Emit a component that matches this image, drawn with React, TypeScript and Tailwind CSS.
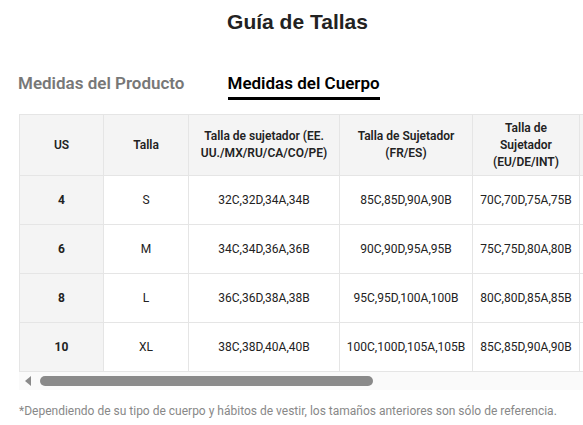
const rows = [
  ["4", "S", "32C,32D,34A,34B", "85C,85D,90A,90B", "70C,70D,75A,75B"],
  ["6", "M", "34C,34D,36A,36B", "90C,90D,95A,95B", "75C,75D,80A,80B"],
  ["8", "L", "36C,36D,38A,38B", "95C,95D,100A,100B", "80C,80D,85A,85B"],
  ["10", "XL", "38C,38D,40A,40B", "100C,100D,105A,105B", "85C,85D,90A,90B"],
];

const widths = ["w-[84px]", "w-[85px]", "w-[151px]", "w-[133px]", "w-[107px]", "w-[100px]"];

export default function App() {
  return (
    <div className="w-[583px] h-[425px] overflow-hidden bg-white font-['Roboto',sans-serif] text-[#222]">
      <h1 className="pt-[8px] pl-[12px] text-center text-[21px] leading-[28px] font-bold font-['Liberation_Sans',Arial,sans-serif] text-[#222]">
        Guía de Tallas
      </h1>

      <div className="mt-[35px] flex items-start gap-[43px] pl-[18px]">
        <div className="text-[17px] leading-[24px] font-semibold text-[#777]">Medidas del Producto</div>
        <div className="flex flex-col">
          <div className="text-[17px] leading-[24px] font-semibold text-black">Medidas del Cuerpo</div>
          <div className="mt-[2px] h-[3px] bg-black" />
        </div>
      </div>

      <div className="mt-[14px] ml-[19px] w-[660px]">
        <table className="w-[660px] table-fixed border-collapse text-[12px] leading-[17px]">
          <thead>
            <tr className="h-[61px] bg-[#f4f4f4]">
              <th className={`${widths[0]} border border-[#e5e5e5] font-semibold`}>US</th>
              <th className={`${widths[1]} border border-[#e5e5e5] font-semibold`}>Talla</th>
              <th className={`${widths[2]} border border-[#e5e5e5] font-semibold px-2`}>
                Talla de sujetador (EE. UU./MX/RU/CA/CO/PE)
              </th>
              <th className={`${widths[3]} border border-[#e5e5e5] font-semibold px-2`}>
                Talla de Sujetador (FR/ES)
              </th>
              <th className={`${widths[4]} border border-[#e5e5e5] font-semibold px-4`}>
                Talla de Sujetador (EU/DE/INT)
              </th>
              <th className={`${widths[5]} border border-[#e5e5e5] font-semibold`}></th>
            </tr>
          </thead>
          <tbody>
            {rows.map((r) => (
              <tr key={r[0]} className="h-[49px]">
                <td className="border border-[#e5e5e5] bg-[#f4f4f4] text-center font-bold">{r[0]}</td>
                <td className="border border-[#e5e5e5] text-center">{r[1]}</td>
                <td className="border border-[#e5e5e5] text-center">{r[2]}</td>
                <td className="border border-[#e5e5e5] text-center">{r[3]}</td>
                <td className="border border-[#e5e5e5] text-center">{r[4]}</td>
                <td className="border border-[#e5e5e5]"></td>
              </tr>
            ))}
          </tbody>
        </table>

        <div className="flex h-[18px] items-center bg-[#fafafa]">
          <svg width="12" height="12" viewBox="0 0 12 12" className="ml-[3px]">
            <path d="M9 1 L3 6 L9 11 Z" fill="#8a8a8a" />
          </svg>
          <div className="ml-[6px] h-[10px] w-[333px] rounded-full bg-[#8a8a8a]" />
        </div>
      </div>

      <p className="mt-[13px] pl-[19px] text-[12px] leading-[16px] text-[#888]">
        *Dependiendo de su tipo de cuerpo y hábitos de vestir, los tamaños anteriores son sólo de referencia.
      </p>
    </div>
  );
}
